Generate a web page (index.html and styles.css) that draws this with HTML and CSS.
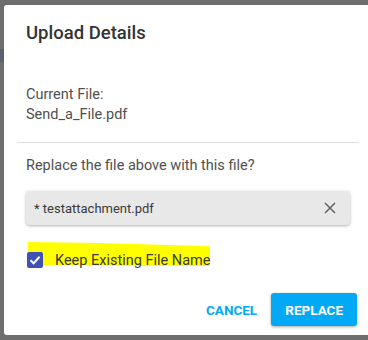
FILE: index.html
```html
<!DOCTYPE html>
<html lang="en">
<head>
  <meta charset="UTF-8">
  <meta name="viewport" content="width=device-width, initial-scale=1.0">
  <title>Upload Details</title>
  <link rel="stylesheet" href="styles.css">
</head>
<body>

  <div class="backdrop-bar"></div>

  <div class="dialog">
    <h2 class="dialog-title">Upload Details</h2>

    <div class="current-file">
      <p>Current File:</p>
      <p>Send_a_File.pdf</p>
    </div>

    <hr class="divider">

    <p class="question">Replace the file above with this file?</p>

    <div class="file-chip">
      <span>* testattachment.pdf</span>
      <svg class="chip-close" width="14" height="14" viewBox="0 0 14 14">
        <path d="M2 2 L12 12 M12 2 L2 12" stroke="#666" stroke-width="1.6" fill="none"/>
      </svg>
    </div>

    <label class="keep-name">
      <span class="highlight"></span>
      <span class="checkbox">
        <svg width="16" height="16" viewBox="0 0 16 16">
          <path d="M3.5 8.2 L6.6 11.2 L12.6 4.8" stroke="#fff" stroke-width="2" fill="none"/>
        </svg>
      </span>
      <span class="keep-text">Keep Existing File Name</span>
    </label>

    <div class="actions">
      <button class="btn-text">CANCEL</button>
      <button class="btn-primary">REPLACE</button>
    </div>
  </div>

</body>
</html>
```

FILE: styles.css
```css
body {
  margin: 0;
  width: 368px;
  height: 340px;
  overflow: hidden;
  background-color: #6e6e6e;
  font-family: Roboto, "Liberation Sans", Arial, sans-serif;
  position: relative;
}
.backdrop-bar {
  position: absolute;
  left: 0;
  top: 49px;
  width: 4px;
  height: 13px;
  background-color: #5a6270;
}
.dialog {
  margin: 5px 0 0 4px;
  width: 380px;
  height: 330px;
  background-color: #fff;
  border-radius: 3px 0 0 3px;
  padding: 0 0 0 22px;
  box-sizing: border-box;
  position: relative;
}
.dialog-title {
  margin: 0;
  padding-top: 17px;
  font-size: 18.5px;
  font-weight: 500;
  color: #333;
  line-height: 22px;
}
.current-file {
  margin-top: 41px;
  font-size: 14.5px;
  color: #505050;
}
.current-file p {
  margin: 0;
  line-height: 20px;
}
.divider {
  margin: 17px 0 0 -9px;
  width: 342px;
  border: none;
  border-top: 1px solid #dcdcdc;
}
.question {
  margin: 13px 0 0 0;
  font-size: 14.5px;
  color: #505050;
  line-height: 20px;
}
.file-chip {
  margin-top: 15px;
  width: 324px;
  height: 34px;
  box-sizing: border-box;
  background-color: #e8e8e8;
  border-radius: 4px;
  box-shadow: 0 1px 3px rgba(0, 0, 0, 0.3);
  display: flex;
  align-items: center;
  justify-content: space-between;
  padding: 0 13px 0 8px;
  font-size: 13px;
  color: #3a3a3a;
}
.chip-close {
  display: block;
}
.keep-name {
  margin-top: 26px;
  display: flex;
  align-items: center;
  position: relative;
  height: 18px;
}
.highlight {
  position: absolute;
  left: 2px;
  top: -9px;
  width: 182px;
  height: 24px;
  background-color: #ffff00;
  clip-path: polygon(0 0, 40% 4%, 100% 18%, 100% 100%, 55% 100%, 0 96%);
}
.checkbox {
  position: relative;
  margin-left: 1px;
  width: 16px;
  height: 16px;
  border-radius: 2px;
  background-color: #3f51b5;
  display: flex;
}
.keep-text {
  position: relative;
  margin-left: 12px;
  font-size: 14.5px;
  color: #3a3a3a;
}
.actions {
  margin-top: 24px;
  display: flex;
  align-items: center;
  gap: 8px;
  padding-left: 174px;
}
.actions button {
  font-family: Roboto, "Liberation Sans", Arial, sans-serif;
  font-weight: 700;
  font-size: 13.5px;
  border: none;
  cursor: pointer;
}
.btn-text {
  background: none;
  color: #03a9f4;
  padding: 0 6px;
  height: 32px;
}
.btn-primary {
  background-color: #03a9f4;
  color: #fff;
  width: 86px;
  height: 33px;
  border-radius: 3px;
  box-shadow: 0 1px 3px rgba(0, 0, 0, 0.35);
}
```
